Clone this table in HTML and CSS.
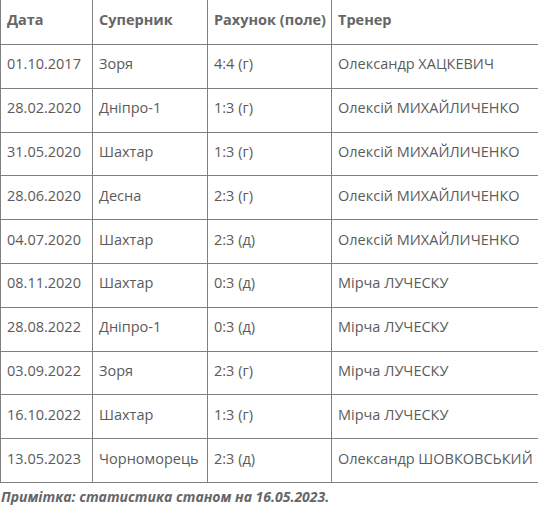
FILE: index.html
```html
<!DOCTYPE html>
<html lang="uk">
<head>
<meta charset="utf-8">
<link rel="stylesheet" href="styles.css">
</head>
<body>
<table class="stats">
  <colgroup>
    <col class="c1"><col class="c2"><col class="c3"><col class="c4">
  </colgroup>
  <thead>
    <tr><th>Дата</th><th>Суперник</th><th>Рахунок (поле)</th><th>Тренер</th></tr>
  </thead>
  <tbody>
    <tr><td>01.10.2017</td><td>Зоря</td><td>4:4 (г)</td><td>Олександр ХАЦКЕВИЧ</td></tr>
    <tr><td>28.02.2020</td><td>Дніпро-1</td><td>1:3 (г)</td><td>Олексій МИХАЙЛИЧЕНКО</td></tr>
    <tr><td>31.05.2020</td><td>Шахтар</td><td>1:3 (г)</td><td>Олексій МИХАЙЛИЧЕНКО</td></tr>
    <tr><td>28.06.2020</td><td>Десна</td><td>2:3 (г)</td><td>Олексій МИХАЙЛИЧЕНКО</td></tr>
    <tr><td>04.07.2020</td><td>Шахтар</td><td>2:3 (д)</td><td>Олексій МИХАЙЛИЧЕНКО</td></tr>
    <tr><td>08.11.2020</td><td>Шахтар</td><td>0:3 (д)</td><td>Мірча ЛУЧЕСКУ</td></tr>
    <tr><td>28.08.2022</td><td>Дніпро-1</td><td>0:3 (д)</td><td>Мірча ЛУЧЕСКУ</td></tr>
    <tr><td>03.09.2022</td><td>Зоря</td><td>2:3 (г)</td><td>Мірча ЛУЧЕСКУ</td></tr>
    <tr><td>16.10.2022</td><td>Шахтар</td><td>1:3 (г)</td><td>Мірча ЛУЧЕСКУ</td></tr>
    <tr><td>13.05.2023</td><td>Чорноморець</td><td>2:3 (д)</td><td>Олександр ШОВКОВСЬКИЙ</td></tr>
  </tbody>
</table>
<p class="note">Примітка: статистика станом на 16.05.2023.</p>
</body>
</html>
```
FILE: styles.css
```css
html, body {
  margin: 0;
  padding: 0;
  background: #fff;
}
body {
  font-family: "Open Sans", "Noto Sans", sans-serif;
  font-size: 14px;
  color: #5b5b5b;
}
.stats {
  border-collapse: collapse;
  width: 538px;
  table-layout: fixed;
  margin-top: -1px;
  font-size: 14.5px;
}
.c1 { width: 92px; }
.c2 { width: 115px; }
.c3 { width: 124px; }
.c4 { width: 207px; }
.stats th, .stats td {
  border: 1px solid #808080;
  padding: 0 5px 4px 6px;
  height: 38.8px;
  text-align: left;
  vertical-align: middle;
  line-height: 20px;
  white-space: nowrap;
}
.stats th {
  font-weight: 700;
  color: #666;
  height: 40px;
}
.note {
  margin: 4px 0 0 1px;
  font-weight: 700;
  font-style: italic;
  color: #666;
  line-height: 20px;
}
```
